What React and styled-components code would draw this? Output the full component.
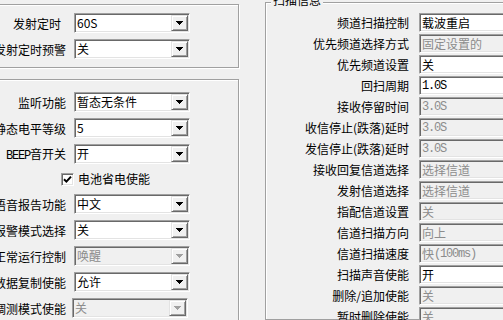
import React from "react";
import styled, { createGlobalStyle } from "styled-components";

const GlobalStyle = createGlobalStyle`
  html, body {
    margin: 0;
    padding: 0;
    background: #f0f0f0;
  }
  body {
    font-family: "Noto Sans CJK SC", "Liberation Sans", sans-serif;
    font-size: 12px;
    color: #000;
  }
`;

const Screen = styled.div`
  display: flex;
  width: 503px;
  height: 320px;
  overflow: hidden;
  background: #f0f0f0;
`;

const LeftColumn = styled.div`
  display: flex;
  flex-direction: column;
  flex: 0 0 269px;
  margin-left: -30px;
`;

const GroupBox = styled.div`
  position: relative;
  flex: ${p => (p.$width ? `0 0 ${p.$width}px` : "none")};
  margin-top: ${p => p.$top}px;
  margin-left: ${p => p.$left || 0}px;
  padding: ${p => p.$padTop}px 0 ${p => p.$padBottom || 0}px;
  border: 1px solid #a0a0a0;
  box-shadow: inset 1px 1px 0 #fff, 1px 1px 0 #fff;
`;

const Caption = styled.span`
  position: absolute;
  top: -10px;
  left: 5px;
  padding: 0 2px;
  background: #f0f0f0;
  line-height: 14px;
`;

const FormRow = styled.div`
  display: flex;
  align-items: center;
  height: ${p => p.$h}px;
`;

const Label = styled.span`
  flex: 0 0 ${p => p.$w}px;
  box-sizing: border-box;
  padding-right: ${p => p.$pr || 0}px;
  text-align: right;
  white-space: nowrap;
  line-height: 14px;
  padding-top: 1px;
`;

const Field = styled.div`
  box-sizing: border-box;
  display: flex;
  flex: 0 0 ${p => p.$w}px;
  height: ${p => p.$h}px;
  margin-left: ${p => p.$gap}px;
  padding: 1px;
  border: 1px solid;
  border-color: #a0a0a0 #fff #fff #a0a0a0;
  box-shadow: inset 1px 1px 0 #696969, inset -1px -1px 0 #e3e3e3;
  background: ${p => (p.$disabled ? "#f0f0f0" : "#fff")};
  color: ${p => (p.$disabled ? "#8c8c8c" : "#000")};
`;

const Value = styled.span`
  flex: 1;
  display: flex;
  align-items: center;
  padding-left: 1px;
  white-space: nowrap;
  overflow: hidden;
  line-height: 14px;
`;

const DropButton = styled.span`
  flex: 0 0 17px;
  box-sizing: border-box;
  display: flex;
  align-items: center;
  justify-content: center;
  border: 1px solid;
  border-color: #e3e3e3 #696969 #696969 #e3e3e3;
  box-shadow: inset 1px 1px 0 #fff, inset -1px -1px 0 #a0a0a0;
  background: #f0f0f0;
`;

const Half = styled.span`
  font-family: "Liberation Mono", monospace;
  font-size: 12px;
  letter-spacing: -1.2px;
`;

const CheckRow = styled.label`
  display: flex;
  align-items: center;
  height: 24px;
  padding-left: 90px;
  line-height: 14px;
`;

const CheckBox = styled.span`
  box-sizing: border-box;
  display: flex;
  align-items: center;
  justify-content: center;
  width: 13px;
  height: 13px;
  margin-right: 4px;
  border: 1px solid;
  border-color: #a0a0a0 #fff #fff #a0a0a0;
  box-shadow: inset 1px 1px 0 #696969, inset -1px -1px 0 #e3e3e3;
  background: #fff;
`;

const Arrow = ({ disabled }) => (
  <svg width="7" height="4" viewBox="0 0 7 4" shapeRendering="crispEdges">
    <polygon points="0,0 7,0 3.5,4" fill={disabled ? "#a0a0a0" : "#000"} />
  </svg>
);

function Combo({ label, value, disabled, pr, gap = 8 }) {
  return (
    <FormRow $h={26}>
      <Label $w={95} $pr={pr}>{label}</Label>
      <Field $w={116} $h={20} $gap={gap} $disabled={disabled}>
        <Value>{value}</Value>
        <DropButton>
          <Arrow disabled={disabled} />
        </DropButton>
      </Field>
    </FormRow>
  );
}

function ScanRow({ label, value, disabled }) {
  return (
    <FormRow $h={21}>
      <Label $w={143}>{label}</Label>
      <Field $w={130} $h={19} $gap={10} $disabled={disabled}>
        <Value>{value}</Value>
      </Field>
    </FormRow>
  );
}

const timerRows = [
  { label: "发射定时", value: "60S", pr: 5 },
  { label: "发射定时预警", value: "关" },
];

const monitorTop = [
  { label: "监听功能", value: "暂态无条件" },
  { label: "静态电平等级", value: "5" },
  { label: <><Half>BEEP</Half>音开关</>, value: "开" },
];

const monitorBottom = [
  { label: "语音报告功能", value: "中文" },
  { label: "报警模式选择", value: "关" },
  { label: "正常运行控制", value: "唤醒", disabled: true },
  { label: "数据复制使能", value: "允许" },
  { label: "调测模式使能", value: "关", disabled: true, gap: 6 },
];

const scanRows = [
  { label: "频道扫描控制", value: "载波重启" },
  { label: "优先频道选择方式", value: "固定设置的", disabled: true },
  { label: "优先频道设置", value: "关" },
  { label: "回扫周期", value: <Half>1.0S</Half> },
  { label: "接收停留时间", value: <Half>3.0S</Half>, disabled: true },
  { label: "收信停止(跌落)延时", value: <Half>3.0S</Half>, disabled: true },
  { label: "发信停止(跌落)延时", value: <Half>3.0S</Half>, disabled: true },
  { label: "接收回复信道选择", value: "选择信道", disabled: true },
  { label: "发射信道选择", value: "选择信道", disabled: true },
  { label: "指配信道设置", value: "关", disabled: true },
  { label: "信道扫描方向", value: "向上", disabled: true },
  { label: "信道扫描速度", value: <>快<Half>(100ms)</Half></>, disabled: true },
  { label: "扫描声音使能", value: "开" },
  { label: "删除/追加使能", value: "关", disabled: true },
  { label: "暂时删除使能", value: "关", disabled: true },
];

export default function App() {
  return (
    <>
      <GlobalStyle />
      <Screen>
        <LeftColumn>
          <GroupBox $top={4} $padTop={5} $padBottom={5}>
            {timerRows.map((r, i) => <Combo key={i} {...r} />)}
          </GroupBox>
          <GroupBox $top={11} $padTop={9} $padBottom={10}>
            {monitorTop.map((r, i) => <Combo key={i} {...r} />)}
            <CheckRow>
              <CheckBox>
                <svg width="9" height="9" viewBox="0 0 9 9">
                  <path d="M1 4.2 L3.4 6.6 L8 1.6" fill="none" stroke="#000" strokeWidth="2" />
                </svg>
              </CheckBox>
              电池省电使能
            </CheckRow>
            {monitorBottom.map((r, i) => <Combo key={i} {...r} />)}
          </GroupBox>
        </LeftColumn>
        <GroupBox $width={300} $top={2} $left={26} $padTop={9}>
          <Caption>扫描信息</Caption>
          {scanRows.map((r, i) => <ScanRow key={i} {...r} />)}
        </GroupBox>
      </Screen>
    </>
  );
}
